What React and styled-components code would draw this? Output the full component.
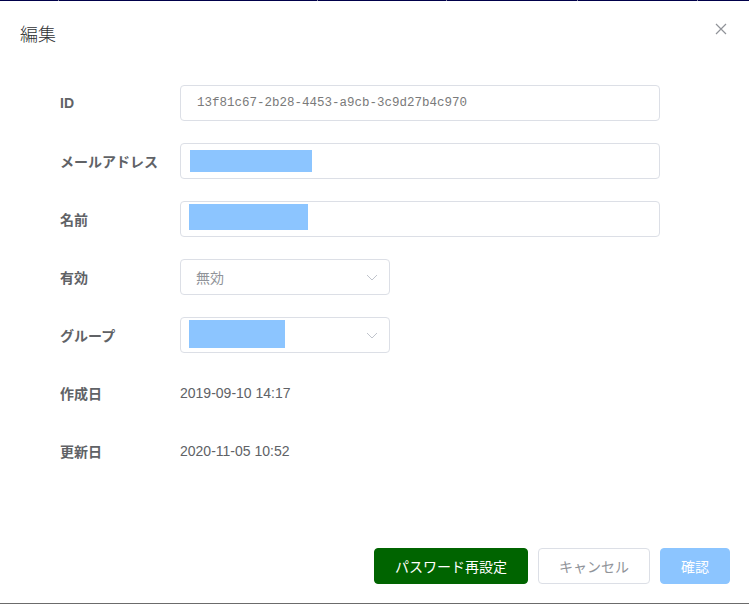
import React from 'react'
import styled, { createGlobalStyle } from 'styled-components'

const GlobalStyle = createGlobalStyle`
  html, body {
    margin: 0;
    padding: 0;
    background: #fff;
  }
  body {
    font-family: "Liberation Sans", "Noto Sans CJK JP", sans-serif;
  }
`

const colors = {
  label: '#606266',
  text: '#606266',
  border: '#dcdfe6',
  redact: '#8cc5ff',
  green: '#006400',
}

const Page = styled.div`
  width: 749px;
  height: 604px;
  box-sizing: border-box;
  display: flex;
  flex-direction: column;
  background: #fff;
`

const TopStrip = styled.div`
  height: 1px;
  flex-shrink: 0;
  background: linear-gradient(
    to right,
    #00004a 58px,
    #8a8aa0 58px,
    #8a8aa0 59px,
    #00004a 59px,
    #00004a 317px,
    #8a8aa0 317px,
    #8a8aa0 318px,
    #00004a 318px,
    #00004a 446px,
    #8a8aa0 446px,
    #8a8aa0 447px,
    #00004a 447px,
    #00004a 577px,
    #8a8aa0 577px,
    #8a8aa0 578px,
    #00004a 578px,
    #00004a 697px,
    #8a8aa0 697px,
    #8a8aa0 698px,
    #00004a 698px
  );
`

const Dialog = styled.div`
  flex: 1;
  display: flex;
  flex-direction: column;
  border-bottom: 1px solid #6b6b6b;
`

const Header = styled.div`
  display: flex;
  justify-content: space-between;
  align-items: center;
  padding: 20px 20px 10px 20px;
`

const Title = styled.span`
  font-size: 18px;
  line-height: 24px;
  color: #303133;
  font-family: "Noto Sans CJK JP", sans-serif;
  font-weight: 300;
`

const CloseButton = styled.button`
  border: none;
  background: none;
  padding: 0;
  width: 14px;
  height: 14px;
  margin-right: 1px;
  margin-top: -8px;
  display: flex;
  align-items: center;
  justify-content: center;
  cursor: pointer;
`

const Form = styled.form`
  display: flex;
  flex-direction: column;
  gap: 22px;
  padding: 30px 0 0 60px;
`

const Row = styled.div`
  display: flex;
  align-items: center;
  min-height: 36px;
`

const Label = styled.label`
  width: 120px;
  flex-shrink: 0;
  font-size: 14px;
  font-weight: bold;
  color: ${colors.label};
`

const Field = styled.div`
  position: relative;
  box-sizing: border-box;
  width: ${(p) => p.width}px;
  height: 36px;
  border: 1px solid ${colors.border};
  border-radius: 4px;
  display: flex;
  align-items: center;
  padding-left: ${(p) => p.pad || 15}px;
  background: #fff;
`

const IdText = styled.span`
  font-family: "Liberation Mono", monospace;
  font-size: 12.5px;
  color: #7a7a7a;
`

const SelectText = styled.span`
  font-size: 14px;
  color: #909399;
  font-family: "Noto Sans CJK JP", sans-serif;
`

const Redacted = styled.span`
  display: block;
  width: ${(p) => p.w}px;
  height: ${(p) => p.h}px;
  margin-top: ${(p) => p.dy || 0}px;
  background: ${colors.redact};
`

const Chevron = styled.span`
  position: absolute;
  right: 10px;
  top: 50%;
  transform: translateY(-50%);
  display: flex;
`

const Value = styled.span`
  font-size: 14px;
  color: ${colors.text};
`

const Footer = styled.div`
  margin-top: auto;
  display: flex;
  justify-content: flex-end;
  gap: 10px;
  padding: 0 19px 19px 0;
`

const Button = styled.button`
  box-sizing: border-box;
  height: 36px;
  padding: 0 20px;
  border-radius: 4px;
  font-size: 14px;
  font-family: "Noto Sans CJK JP", sans-serif;
  border: 1px solid ${(p) => p.border};
  background: ${(p) => p.bg};
  color: ${(p) => p.color};
  cursor: pointer;
`

function ChevronDown() {
  return (
    <svg width="14" height="14" viewBox="0 0 14 14">
      <path d="M2 5 L7 10 L12 5" fill="none" stroke="#c0c4cc" strokeWidth="1" />
    </svg>
  )
}

function App() {
  return (
    <Page>
      <GlobalStyle />
      <TopStrip />
      <Dialog>
        <Header>
          <Title>編集</Title>
          <CloseButton type="button" aria-label="close">
            <svg width="12" height="12" viewBox="0 0 12 12">
              <path d="M1 1 L11 11 M11 1 L1 11" stroke="#909399" strokeWidth="1.2" />
            </svg>
          </CloseButton>
        </Header>

        <Form>
          <Row>
            <Label>ID</Label>
            <Field width={480} pad={16}>
              <IdText>13f81c67-2b28-4453-a9cb-3c9d27b4c970</IdText>
            </Field>
          </Row>
          <Row>
            <Label>メールアドレス</Label>
            <Field width={480} pad={9}>
              <Redacted w={122} h={22} />
            </Field>
          </Row>
          <Row>
            <Label>名前</Label>
            <Field width={480} pad={8}>
              <Redacted w={119} h={26} dy={-4} />
            </Field>
          </Row>
          <Row>
            <Label>有効</Label>
            <Field width={210}>
              <SelectText>無効</SelectText>
              <Chevron>
                <ChevronDown />
              </Chevron>
            </Field>
          </Row>
          <Row>
            <Label>グループ</Label>
            <Field width={210} pad={8}>
              <Redacted w={96} h={28} dy={-2} />
              <Chevron>
                <ChevronDown />
              </Chevron>
            </Field>
          </Row>
          <Row>
            <Label>作成日</Label>
            <Value>2019-09-10 14:17</Value>
          </Row>
          <Row>
            <Label>更新日</Label>
            <Value>2020-11-05 10:52</Value>
          </Row>
        </Form>

        <Footer>
          <Button type="button" bg={colors.green} border={colors.green} color="#fff">
            パスワード再設定
          </Button>
          <Button type="button" bg="#fff" border={colors.border} color="#909399">
            キャンセル
          </Button>
          <Button type="button" bg={colors.redact} border={colors.redact} color="#fff">
            確認
          </Button>
        </Footer>
      </Dialog>
    </Page>
  )
}

export default App
